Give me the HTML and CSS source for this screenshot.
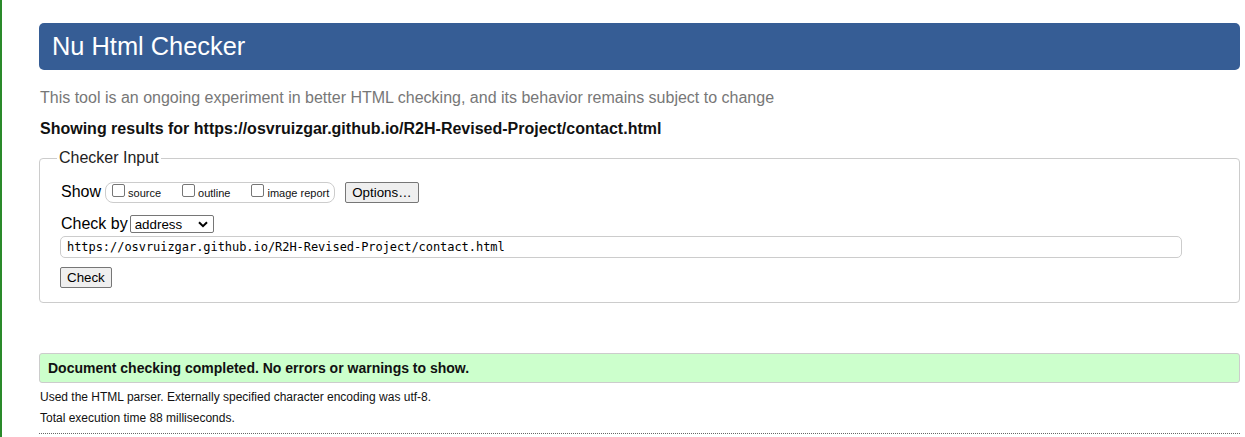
FILE: index.html
```html
<!DOCTYPE html>
<html>
<head>
<meta charset="utf-8">
<link rel="stylesheet" href="styles.css">
</head>
<body>
<div class="page">
  <h1 class="header">Nu Html Checker</h1>
  <p class="intro">This tool is an ongoing experiment in better HTML checking, and its behavior remains subject to change</p>
  <p class="showing">Showing results for https://osvruizgar.github.io/R2H-Revised-Project/contact.html</p>
  <fieldset class="input">
    <legend class="legend">Checker Input</legend>
    <div class="row show-row">
      <span class="label">Show</span>
      <span class="opts">
        <label class="opt"><span class="cb"></span>source</label>
        <label class="opt"><span class="cb"></span>outline</label>
        <label class="opt"><span class="cb"></span>image report</label>
      </span>
      <span class="btn">Options…</span>
    </div>
    <div class="row by-row">
      <span class="label">Check by</span>
      <span class="select">address<svg class="chev" width="10" height="7" viewBox="0 0 10 7"><path d="M1 1.2 L5 5.2 L9 1.2" fill="none" stroke="#000" stroke-width="2"/></svg></span>
    </div>
    <div class="url">https://osvruizgar.github.io/R2H-Revised-Project/contact.html</div>
    <div class="row"><span class="btn check">Check</span></div>
  </fieldset>
  <div class="success">Document checking completed. No errors or warnings to show.</div>
  <p class="small">Used the HTML parser. Externally specified character encoding was utf-8.</p>
  <p class="small">Total execution time 88 milliseconds.</p>
  <div class="dotted"></div>
</div>
</body>
</html>
```
FILE: styles.css
```css
html, body {
  margin: 0;
  padding: 0;
  background: #fff;
}
body {
  font-family: "Liberation Sans", Arial, sans-serif;
  color: #000;
  border-left: 2px solid #2a8a2a;
  min-height: 437px;
  box-sizing: border-box;
}
.page {
  padding: 23px 5px 0 37px;
}
.header {
  margin: 0;
  height: 47px;
  box-sizing: border-box;
  background: #365d95;
  color: #fff;
  border-radius: 5px;
  font-weight: normal;
  font-size: 25.4px;
  line-height: 47px;
  padding-left: 13px;
}
.intro {
  margin: 18px 0 0 1px;
  color: #777;
  font-size: 16px;
  line-height: 19px;
}
.showing {
  margin: 12px 0 0 1px;
  font-weight: bold;
  font-size: 16px;
  line-height: 19px;
  color: #111;
}
.input {
  margin: 11px 0 0 0;
  border: 1px solid #ccc;
  border-radius: 4px;
  padding: 5px 20px 14px 20px;
}
.legend {
  font-size: 16px;
  padding: 0 2px;
  margin-left: -3px;
  color: #222;
}
.row {
  display: flex;
  align-items: center;
}
.label {
  font-size: 16px;
  margin-left: 1px;
}
.show-row {
  margin-top: 9px;
  height: 22px;
}
.opts {
  display: flex;
  align-items: center;
  margin-left: 4px;
  border: 1px solid #ccc;
  border-radius: 8px;
  height: 18px;
  padding: 1px 5px 0 6px;
  box-sizing: content-box;
}
.opt {
  display: flex;
  align-items: center;
  font-size: 11px;
  color: #111;
  margin-right: 21px;
}
.opt:last-child {
  margin-right: 0;
}
.cb {
  width: 11px;
  height: 11px;
  border: 1px solid #767676;
  border-radius: 2px;
  margin-right: 3px;
  margin-top: -4px;
}
.btn {
  display: inline-block;
  font-size: 13.33px;
  border: 1px solid #767676;
  border-radius: 2px;
  background: #efefef;
  padding: 1px 6px;
  line-height: 17px;
  margin-left: 10px;
  color: #000;
}
.by-row {
  margin-top: 12px;
}
.select {
  display: flex;
  align-items: center;
  justify-content: space-between;
  margin-left: 2px;
  width: 84px;
  height: 18px;
  box-sizing: border-box;
  border: 1px solid #767676;
  border-radius: 2px;
  font-size: 13.33px;
  padding: 0 5px 0 4px;
}
.url {
  margin-top: 3px;
  width: 1122px;
  height: 22px;
  box-sizing: border-box;
  border: 1px solid #ccc;
  border-radius: 5px;
  font-family: "DejaVu Sans Mono", monospace;
  font-size: 12px;
  line-height: 20px;
  padding-left: 6px;
  letter-spacing: -0.05px;
}
.row .check {
  margin-left: 0;
  margin-top: 9px;
}
.success {
  margin-top: 50px;
  background: #ccffcc;
  border: 1px solid #ccc;
  border-radius: 3px;
  height: 30px;
  box-sizing: border-box;
  font-size: 14px;
  font-weight: bold;
  line-height: 28px;
  padding-left: 8px;
  color: #111;
}
.small {
  margin: 7px 0 0 1px;
  font-size: 12px;
  line-height: 15px;
  color: #111;
}
.small + .small {
  margin-top: 6px;
}
.dotted {
  margin-top: 7px;
  border-top: 1px dotted #666;
}
```
